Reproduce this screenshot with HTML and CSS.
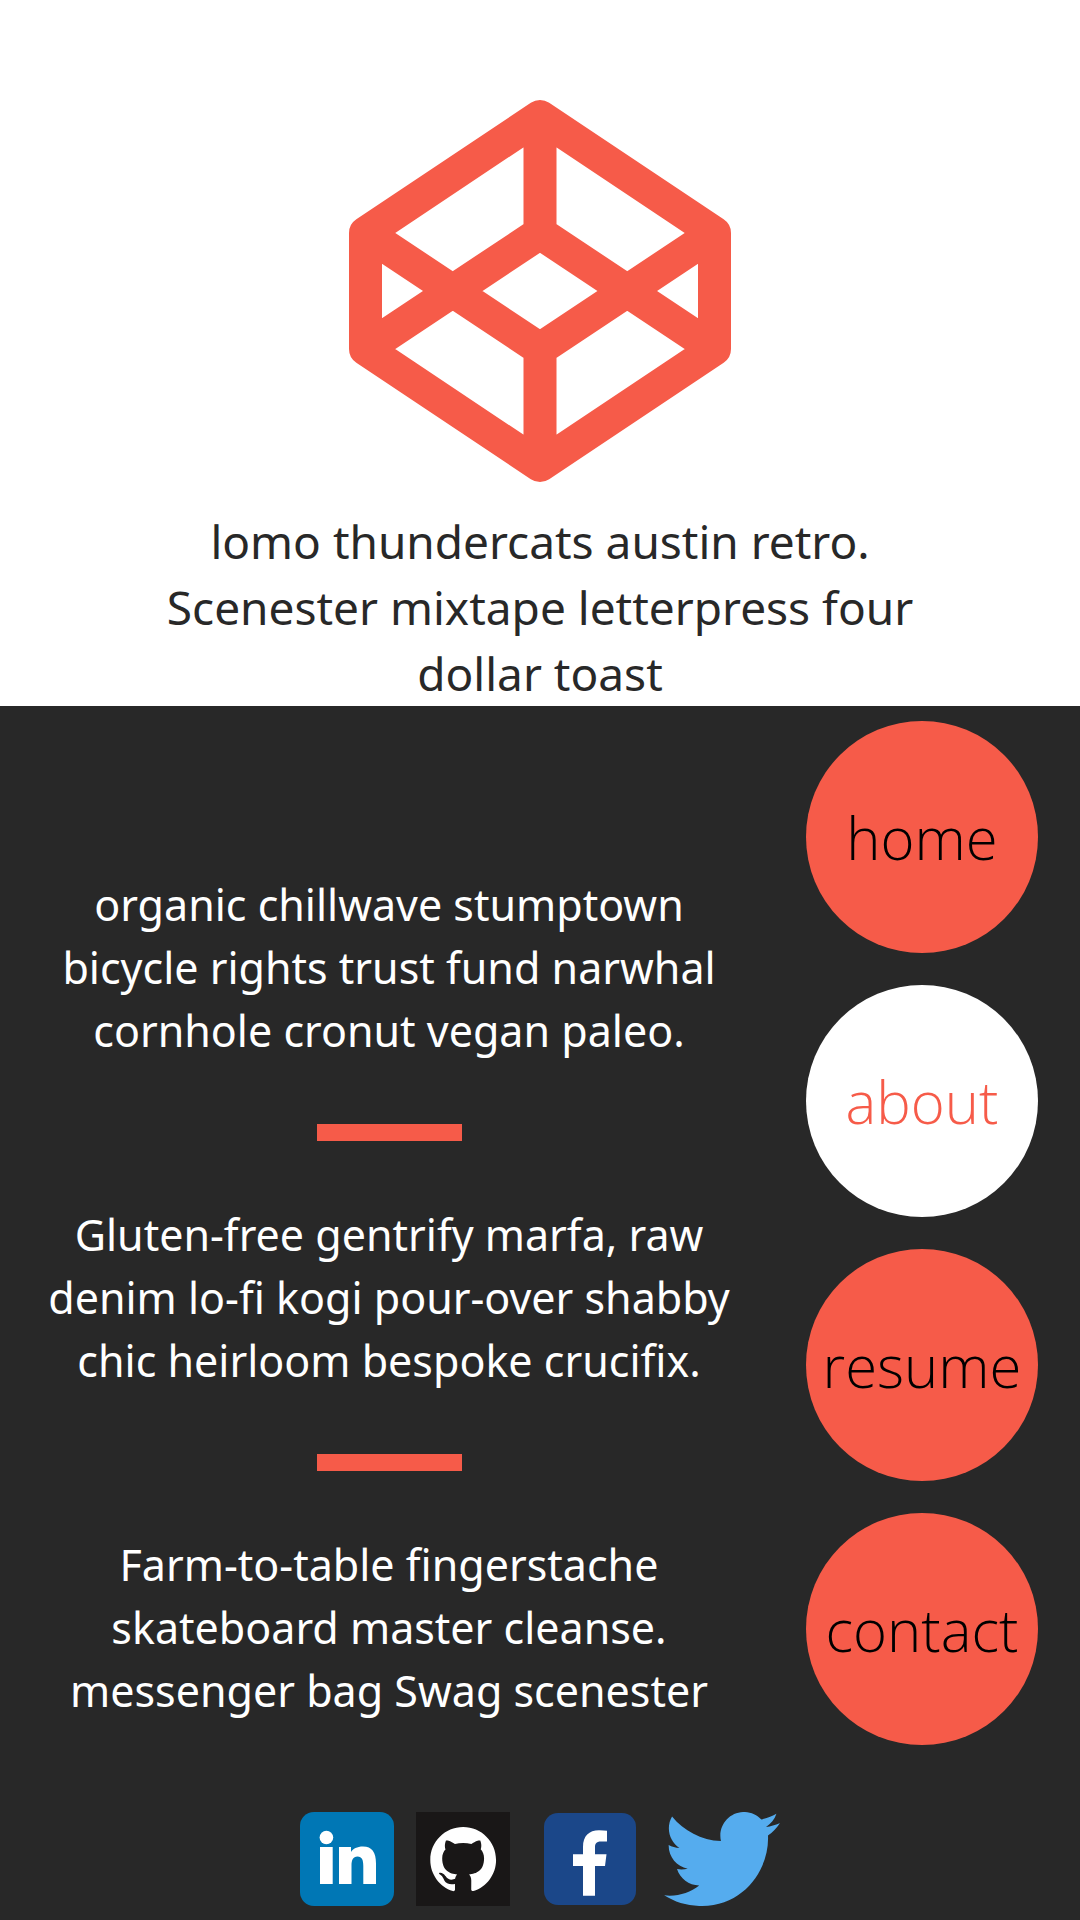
FILE: index.html
```html
<!DOCTYPE html>
<html lang="en">
<head>
<meta charset="utf-8">
<meta name="viewport" content="width=device-width, initial-scale=1">
<title>About</title>
<link rel="stylesheet" href="styles.css">
</head>
<body>
<header class="hero">
  <svg class="logo" viewBox="0 0 382 382" role="img" aria-label="Logo">
    <path d="M191 16.5 365.5 133V249L191 365.5 16.5 249V133ZM16.5 133 191 249 365.5 133M16.5 249 191 133 365.5 249M191 16.5V133M191 249V365.5"/>
  </svg>
  <p class="tagline">lomo thundercats austin retro.<br>Scenester mixtape letterpress four<br>dollar toast</p>
</header>
<div class="content">
  <main class="story">
    <p>organic chillwave stumptown<br>bicycle rights trust fund narwhal<br>cornhole cronut vegan paleo.</p>
    <hr class="rule">
    <p>Gluten-free gentrify marfa, raw<br>denim lo-fi kogi pour-over shabby<br>chic heirloom bespoke crucifix.</p>
    <hr class="rule">
    <p>Farm-to-table fingerstache<br>skateboard master cleanse.<br>messenger bag Swag scenester</p>
  </main>
  <nav class="menu" aria-label="Main">
    <a class="menu-link" href="#home">home</a>
    <a class="menu-link current" href="#about" aria-current="page">about</a>
    <a class="menu-link" href="#resume">resume</a>
    <a class="menu-link" href="#contact">contact</a>
  </nav>
</div>
<footer class="social">
  <a href="#linkedin" aria-label="LinkedIn">
    <svg class="icon" width="94" height="94" viewBox="0 0 94 94">
      <rect width="94" height="94" rx="14" fill="#0077b5"/>
      <circle cx="26.4" cy="25.5" r="6.8" fill="#fff"/>
      <path fill="#fff" d="M20 35H32.7V72H20ZM39 35H51V40C53 37 57 34.6 63 34.6C72 34.6 76 40.5 76 51.5V72H63.3V54C63.3 48 62 44.5 57.5 44.5C53 44.5 51.5 48 51.5 54V72H39Z"/>
    </svg>
  </a>
  <a href="#github" aria-label="GitHub">
    <svg class="icon" width="94" height="94" viewBox="0 0 94 94">
      <rect width="94" height="94" fill="#191717"/>
      <path fill="#fff" transform="translate(14.3 14.2) scale(2.74)" d="M12 .297c-6.63 0-12 5.373-12 12 0 5.303 3.438 9.8 8.205 11.385.6.113.82-.258.82-.577 0-.285-.01-1.04-.015-2.04-3.338.724-4.042-1.61-4.042-1.61C4.422 18.07 3.633 17.7 3.633 17.7c-1.087-.744.084-.729.084-.729 1.205.084 1.838 1.236 1.838 1.236 1.07 1.835 2.809 1.305 3.495.998.108-.776.417-1.305.76-1.605-2.665-.3-5.466-1.332-5.466-5.93 0-1.31.465-2.38 1.235-3.22-.135-.303-.54-1.523.105-3.176 0 0 1.005-.322 3.3 1.23.96-.267 1.98-.399 3-.405 1.02.006 2.04.138 3 .405 2.28-1.552 3.285-1.23 3.285-1.23.645 1.653.24 2.873.12 3.176.765.84 1.23 1.91 1.23 3.22 0 4.61-2.805 5.625-5.475 5.92.42.36.81 1.096.81 2.22 0 1.606-.015 2.896-.015 3.286 0 .315.21.69.825.57C20.565 22.092 24 17.592 24 12.297c0-6.627-5.373-12-12-12"/>
    </svg>
  </a>
  <a href="#facebook" aria-label="Facebook">
    <svg class="icon" width="110" height="94" viewBox="0 0 110 94">
      <rect x="12" y="1" width="92" height="92" rx="14" fill="#1b4789"/>
      <path fill="#fff" d="M51 83.7V54H41V42.3H51V35C51 24 57 18.3 67 18.3Q72 18.3 75 18.8V29.5H69C64 29.5 63 32 63 35V42.3H74.5L73 54H63V83.7Z"/>
    </svg>
  </a>
  <a href="#twitter" aria-label="Twitter">
    <svg class="icon" width="116" height="94" viewBox="0 2.25 24 19.5">
      <path fill="#55acee" d="M23.954 4.569c-.885.389-1.83.654-2.825.775 1.014-.611 1.794-1.574 2.163-2.723-.951.555-2.005.959-3.127 1.184-.896-.959-2.173-1.559-3.591-1.559-2.717 0-4.92 2.203-4.92 4.917 0 .39.045.765.127 1.124C7.691 8.094 4.066 6.13 1.64 3.161c-.427.722-.666 1.561-.666 2.475 0 1.71.87 3.213 2.188 4.096-.807-.026-1.566-.248-2.228-.616v.061c0 2.385 1.693 4.374 3.946 4.827-.413.111-.849.171-1.296.171-.314 0-.615-.03-.916-.086.631 1.953 2.445 3.377 4.604 3.417-1.68 1.319-3.809 2.105-6.102 2.105-.39 0-.779-.023-1.17-.067 2.189 1.394 4.768 2.209 7.557 2.209 9.054 0 13.999-7.496 13.999-13.986 0-.209 0-.42-.015-.63.961-.689 1.8-1.56 2.46-2.548l-.047-.02z"/>
    </svg>
  </a>
</footer>
</body>
</html>
```
FILE: styles.css
```css
* {
  box-sizing: border-box;
}

body {
  margin: 0;
  background: #282828;
  color: #fff;
  font-family: "Noto Sans", "Open Sans", sans-serif;
}

p {
  margin: 0;
}

.hero {
  display: flex;
  flex-direction: column;
  align-items: center;
  gap: 26px;
  padding: 100px 24px 0;
  background: #fff;
  color: #282828;
  text-align: center;
}

.logo {
  width: 382px;
  max-width: 100%;
}

.logo path {
  fill: none;
  stroke: #f65b49;
  stroke-width: 33;
  stroke-linejoin: round;
}

.tagline {
  font-size: 46px;
  line-height: 66px;
}

.content {
  display: flex;
  align-items: flex-start;
  padding: 15px 42px 0 0;
}

.story {
  display: flex;
  flex: 1;
  flex-direction: column;
  align-items: center;
  gap: 62px;
  padding: 152px 28px 0 0;
  font-size: 43px;
  line-height: 63px;
  text-align: center;
}

.rule {
  width: 145px;
  height: 17px;
  margin: 0;
  border: 0;
  background: #f65b49;
}

.menu {
  display: flex;
  flex-direction: column;
  gap: 32px;
}

.menu-link {
  display: flex;
  align-items: center;
  justify-content: center;
  width: 232px;
  height: 232px;
  border-radius: 50%;
  background: #f65b49;
  color: #000;
  font-family: "Open Sans", sans-serif;
  font-size: 58px;
  font-weight: 300;
  text-decoration: none;
}

.current {
  background: #fff;
  color: #f65b49;
}

.social {
  display: flex;
  justify-content: center;
  gap: 22px;
  padding: 67px 0 14px;
}

.icon {
  display: block;
}
```
